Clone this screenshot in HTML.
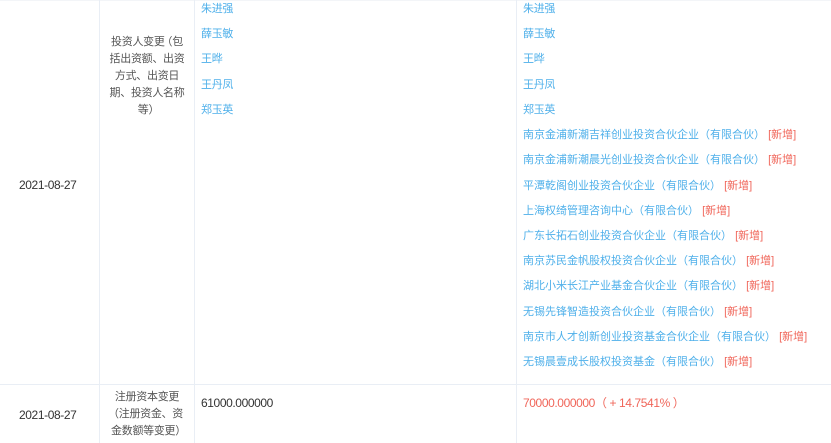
<!DOCTYPE html>
<html><head><meta charset="utf-8"><style>
*{margin:0;padding:0;box-sizing:border-box}
body{width:831px;height:443px;background:#fff;position:relative;overflow:hidden;font-family:"Liberation Sans","Noto Sans CJK SC",sans-serif;font-size:11px;letter-spacing:-0.3px;color:#333}
.v{position:absolute;top:0;width:1px;height:443px;background:#e9eef5}
.h{position:absolute;left:0;width:831px;height:1px;background:#e9eef5}
.t{position:absolute;white-space:nowrap;line-height:16px}
.w{letter-spacing:0}
.b{color:#4fb0ea}
.r{color:#f0665a}
.c{position:absolute;text-align:center;line-height:17px;color:#555}
.po{margin-left:-3px}
.pc{margin-right:-3px}
</style></head><body>
<div class="h" style="top:0;background:#f3f5f8"></div>
<div class="v" style="left:99px"></div>
<div class="v" style="left:194px"></div>
<div class="v" style="left:516px"></div>
<div class="h" style="top:384px"></div>

<div class="t" style="left:19px;top:177px;font-size:12px;letter-spacing:-0.4px">2021-08-27</div>
<div class="c" style="left:102px;width:90px;top:34px">投资人变更<span class="po">（</span>包<br>括出资额、出资<br>方式、出资日<br>期、投资人名称<br>等<span class="pc">）</span></div>

<div class="t b" style="left:201px;top:1px">朱进强</div>
<div class="t b" style="left:201px;top:26px">薛玉敏</div>
<div class="t b" style="left:201px;top:51px">王晔</div>
<div class="t b" style="left:201px;top:77px">王丹凤</div>
<div class="t b" style="left:201px;top:102px">郑玉英</div>

<div class="t b" style="left:523px;top:1px">朱进强</div>
<div class="t b" style="left:523px;top:26px">薛玉敏</div>
<div class="t b" style="left:523px;top:51px">王晔</div>
<div class="t b" style="left:523px;top:77px">王丹凤</div>
<div class="t b" style="left:523px;top:102px">郑玉英</div>
<div class="t w" style="left:523px;top:127px"><span class="b">南京金浦新潮吉祥创业投资合伙企业（有限合伙）</span> <span class="r">[新增]</span></div>
<div class="t w" style="left:523px;top:152px"><span class="b">南京金浦新潮晨光创业投资合伙企业（有限合伙）</span> <span class="r">[新增]</span></div>
<div class="t w" style="left:523px;top:178px"><span class="b">平潭乾阁创业投资合伙企业（有限合伙）</span> <span class="r">[新增]</span></div>
<div class="t w" style="left:523px;top:203px"><span class="b">上海权绮管理咨询中心（有限合伙）</span> <span class="r">[新增]</span></div>
<div class="t w" style="left:523px;top:228px"><span class="b">广东长拓石创业投资合伙企业（有限合伙）</span> <span class="r">[新增]</span></div>
<div class="t w" style="left:523px;top:253px"><span class="b">南京苏民金帆股权投资合伙企业（有限合伙）</span> <span class="r">[新增]</span></div>
<div class="t w" style="left:523px;top:278px"><span class="b">湖北小米长江产业基金合伙企业（有限合伙）</span> <span class="r">[新增]</span></div>
<div class="t w" style="left:523px;top:304px"><span class="b">无锡先锋智造投资合伙企业（有限合伙）</span> <span class="r">[新增]</span></div>
<div class="t w" style="left:523px;top:329px"><span class="b">南京市人才创新创业投资基金合伙企业（有限合伙）</span> <span class="r">[新增]</span></div>
<div class="t w" style="left:523px;top:354px"><span class="b">无锡晨壹成长股权投资基金（有限合伙）</span> <span class="r">[新增]</span></div>

<div class="t" style="left:19px;top:407px;font-size:12px;letter-spacing:-0.4px">2021-08-27</div>
<div class="c" style="left:102px;width:90px;top:389px">注册资本变更<br><span class="po">（</span>注册资金、资<br>金数额等变更<span class="pc">）</span></div>
<div class="t" style="left:201px;top:395px;font-size:12px;letter-spacing:-0.4px">61000.000000</div>
<div class="t r" style="left:523px;top:395px;font-size:12px;letter-spacing:-0.4px">70000.000000（ + 14.7541% ）</div>
</body></html>
